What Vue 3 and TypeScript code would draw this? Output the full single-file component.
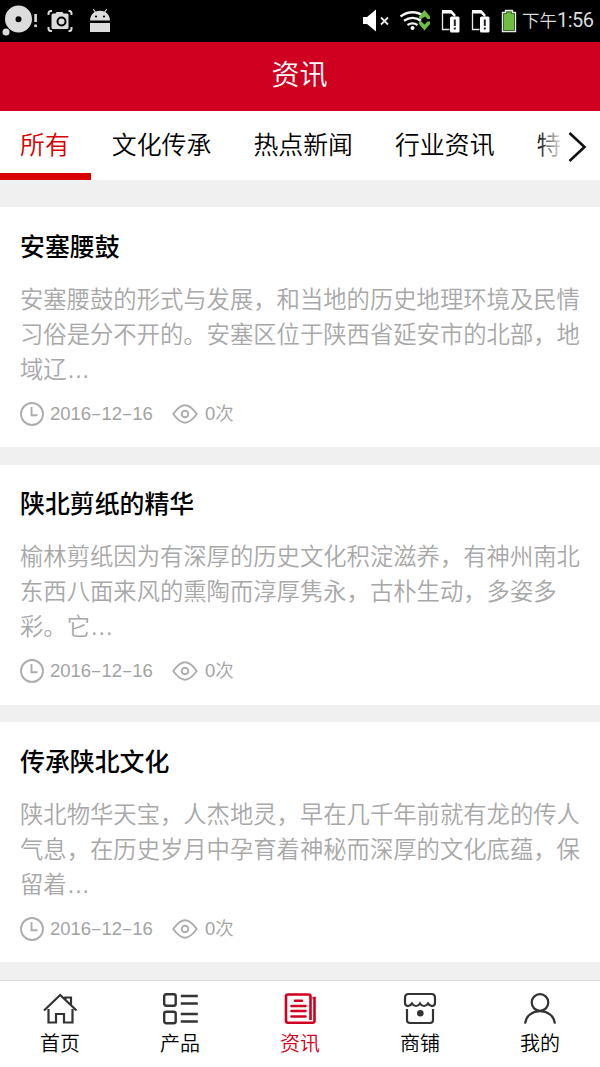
<script setup lang="ts">
interface Article {
  title: string
  lines: string[]
  more: string
  date: string[]
  views: number
}

const tabs: string[] = ['所有', '文化传承', '热点新闻', '行业资讯', '特产']

const articles: Article[] = [
  {
    title: '安塞腰鼓',
    lines: ['安塞腰鼓的形式与发展，和当地的历史地理环境及民情', '习俗是分不开的。安塞区位于陕西省延安市的北部，地'],
    more: '域辽',
    date: ['2016', '12', '16'],
    views: 0,
  },
  {
    title: '陕北剪纸的精华',
    lines: ['榆林剪纸因为有深厚的历史文化积淀滋养，有神州南北', '东西八面来风的熏陶而淳厚隽永，古朴生动，多姿多'],
    more: '彩。它',
    date: ['2016', '12', '16'],
    views: 0,
  },
  {
    title: '传承陕北文化',
    lines: ['陕北物华天宝，人杰地灵，早在几千年前就有龙的传人', '气息，在历史岁月中孕育着神秘而深厚的文化底蕴，保'],
    more: '留着',
    date: ['2016', '12', '16'],
    views: 0,
  },
]

const navItems: { label: string; icon: string }[] = [
  { label: '首页', icon: 'home' },
  { label: '产品', icon: 'list' },
  { label: '资讯', icon: 'news' },
  { label: '商铺', icon: 'shop' },
  { label: '我的', icon: 'user' },
]
</script>

<template>
  <div class="screen">
    <div class="status">
      <svg class="status-left" width="120" height="41" viewBox="0 0 120 41">
        <g fill="#dcdcdc">
          <path fill-rule="evenodd" d="M18.500 5.500a13.500 13.500 0 1 0 0 27a13.500 13.500 0 1 0 0-27zM18.500 16.200a3 3 0 1 1 0 6a3 3 0 1 1 0-6z" />
          <circle cx="6" cy="32" r="3.500" />
          <rect x="34.300" y="14" width="2.600" height="8" />
          <rect x="34.300" y="24.500" width="2.600" height="2.600" />
          <path d="M51.500 15q0-1.500 1.500-1.500h2.500l1-1.500h6l1 1.500h3.500q1.500 0 1.500 1.500v12.500q0 1.500-1.500 1.500h-14q-1.500 0-1.500-1.500z" />
          <path d="M90 20.500q.3-6 4.700-8.500l-2-2.700.8-.6 2.200 2.800q4.300-1.500 8.600 0l2.200-2.800.8.600-2 2.700q4.400 2.500 4.700 8.500z" />
          <rect x="90" y="23" width="20" height="9" />
        </g>
        <circle cx="61.500" cy="21.500" r="4" fill="#dcdcdc" stroke="#000" stroke-width="2" />
        <path d="M48.500 15v-1.500q0-2.500 2.500-2.500h1M68.500 11h1q2 0 2 2.500v1.500M48.500 27v1.500q0 2.500 2.500 2.500h1M68.500 31h1q2 0 2-2.500v-1.500" fill="none" stroke="#dcdcdc" stroke-width="2" />
        <circle cx="96" cy="16.500" r="1.100" fill="#000" />
        <circle cx="104" cy="16.500" r="1.100" fill="#000" />
      </svg>
      <div class="status-right">
        <svg width="156" height="41" viewBox="362 0 156 41">
          <path d="M363 17h4l9-7.500v22l-9-7.500h-4z" fill="#fff" />
          <path d="M381 17.500l7 7M388 17.500l-7 7" stroke="#e8e8e8" stroke-width="1.800" />
          <g fill="none" stroke="#f4f4f4" stroke-width="2.300">
            <path d="M400.500 16.500q12-8.500 24 0" />
            <path d="M404 20.700q8.500-5.700 17 0" />
            <path d="M407.500 25q5-3.200 10 0" />
          </g>
          <circle cx="412.500" cy="28" r="2" fill="#fff" />
          <path d="M419 16.500l5.500-6.500 5.500 6.500v2.500h-2.500l-3-3-3 3h-2.500zM419 24v-2.500h2.500l3 3 3-3h2.500v2.500l-5.500 6.500z" fill="#70bd45" />
          <g v-for="x in [441.500, 471.500]" :key="x" :transform="`translate(${x} 0)`">
            <path d="M1 12v17.500h7" fill="none" stroke="#e8e8e8" stroke-width="1.300" />
            <path d="M.5 13.500V10h9.500l4 4.500v2h-1.500l-3-3z" fill="#fff" />
            <rect x="8.500" y="16.500" width="9.500" height="16" rx="1.500" fill="#fff" />
            <path d="M13.300 19.500v6.500M13.300 27.500v2" stroke="#222" stroke-width="2" />
          </g>
          <path d="M505.500 10.500h7v2h3v19h-13v-19h3z" fill="#70bd45" stroke="#e8e8e8" stroke-width="1.400" />
          <path d="M506.500 12v1.500h-3v17h11v-17h-3v-1.500z" fill="none" stroke="#263c19" stroke-width=".7" />
        </svg>
        <span class="clock"><span class="ampm">下午</span>1:56</span>
      </div>
    </div>

    <header class="header">资讯</header>

    <nav class="tabs">
      <span v-for="(tab, i) in tabs" :key="tab" class="tab" :class="{ active: i === 0 }">{{ tab }}</span>
      <div class="more">
        <svg width="36" height="69" viewBox="0 0 36 69"><path d="M5.500 22l15 14-15 14" fill="none" stroke="#111" stroke-width="2.600" /></svg>
      </div>
    </nav>

    <main class="feed">
      <article v-for="a in articles" :key="a.title" class="card">
        <h2>{{ a.title }}</h2>
        <p>
          <span v-for="line in a.lines" :key="line" class="line">{{ line }}</span>
          <span class="line">{{ a.more }}<span class="dots">...</span></span>
        </p>
        <div class="meta">
          <svg width="24" height="24" viewBox="0 0 24 24" fill="none" stroke="#adadad" stroke-width="1.900">
            <circle cx="12" cy="12" r="11" />
            <path d="M11.500 5v8.200h6" />
          </svg>
          <span class="date"><template v-for="(part, i) in a.date" :key="i"><span v-if="i" class="dash">-</span>{{ part }}</template></span>
          <svg class="eye" width="26" height="24" viewBox="0 0 26 24" fill="none" stroke="#adadad" stroke-width="1.900">
            <path d="M1.200 12C6 5.500 9 3.300 13 3.300S20 5.500 24.800 12C20 18.500 17 20.700 13 20.700S6 18.500 1.200 12z" stroke-linejoin="round" />
            <circle cx="13" cy="12" r="3.300" />
          </svg>
          <span>{{ a.views }}次</span>
        </div>
      </article>
    </main>

    <footer class="bottom">
      <div v-for="item in navItems" :key="item.icon" class="item" :class="{ current: item.icon === 'news' }">
        <svg width="36" height="34" viewBox="0 0 36 34" fill="none" stroke="currentColor" stroke-width="2.200">
          <g v-if="item.icon === 'home'">
            <path d="M2 18.500L18.200 3l16.300 15.500M6.500 17v13.500h7.500V22h8v8.500h8.500V17M23.500 8V5.500h5.500V13" />
          </g>
          <g v-else-if="item.icon === 'list'" stroke-width="2.400">
            <rect x="2.200" y="2.200" width="11.500" height="11.500" rx="2" />
            <rect x="2.200" y="19.700" width="11.500" height="11.500" rx="2" />
            <path d="M18.800 4H35.800M18.800 11.500H35.800M18.800 22H35.800M18.800 29.500H35.800" />
          </g>
          <g v-else-if="item.icon === 'news'" stroke-width="2.600">
            <path d="M28.500 28V4.500q0-2-2-2H6q-2 0-2 2v24.300q0 2 2 2h24.500q2 0 2-2V6h-2" />
            <path d="M13 8.700h7M9.500 14h14M9.500 19h14M9.500 24.500h14" stroke-linecap="round" />
          </g>
          <g v-else-if="item.icon === 'shop'">
            <path d="M3 6q0-4 3.500-4h23q3.500 0 3.500 4v5q0 2.500-2.500 3-2.500.3-4.500-2.500-1.500 2.500-4 2.500t-4-2.500q-1.500 2.500-4 2.500t-4-2.500q-2 2.800-4.500 2.500Q3 13.500 3 11zM5 17v11q0 3 3 3h20q3 0 3-3V17" />
            <circle cx="18.300" cy="21.300" r="3.300" fill="currentColor" stroke="none" />
          </g>
          <g v-else>
            <circle cx="18" cy="10.500" r="8.300" />
            <path d="M3 31.700C4.500 15 31.500 15 33 31.700" />
          </g>
        </svg>
        <span class="label">{{ item.label }}</span>
      </div>
    </footer>
  </div>
</template>

<style>
body {
  margin: 0;
}
</style>

<style scoped>
.screen {
  width: 600px;
  height: 1067px;
  overflow: hidden;
  display: flex;
  flex-direction: column;
  background: #f0f0f0;
  color: #000;
  font-family: 'Liberation Sans', 'Noto Sans CJK SC', sans-serif;
  font-weight: 350;
}
svg {
  display: block;
  flex: none;
}
.status {
  flex: none;
  height: 41.500px;
  background: #000;
  display: flex;
  justify-content: space-between;
}
.status-right {
  display: flex;
  width: 238px;
}
.clock {
  font-family: Roboto, 'Noto Sans CJK SC', sans-serif;
  font-size: 20px;
  font-weight: 400;
  letter-spacing: -0.500px;
  line-height: 41px;
  color: #dcdcdc;
  margin-left: 4px;
  white-space: nowrap;
}
.ampm {
  font-size: 17.500px;
  font-weight: 350;
  letter-spacing: 0;
}
.header {
  flex: none;
  height: 69.500px;
  background: #d00020;
  color: #fff;
  font-size: 28px;
  line-height: 67px;
  text-align: center;
  text-indent: -1px;
}
.tabs {
  position: relative;
  flex: none;
  height: 69px;
  background: #fff;
  display: flex;
  overflow: hidden;
}
.tab {
  flex: none;
  box-sizing: border-box;
  height: 69px;
  padding: 0 21px;
  font-size: 24.900px;
  line-height: 69px;
  white-space: nowrap;
}
.tab.active {
  padding-left: 20px;
  color: #d80000;
  border-bottom: 7px solid #d80000;
}
.more {
  position: absolute;
  top: 0;
  right: 0;
  width: 64px;
  height: 69px;
  display: flex;
  justify-content: flex-end;
  background: linear-gradient(to right, rgba(255, 255, 255, 0), #fff 28px);
}
.feed {
  flex: 1;
  min-height: 0;
  overflow: hidden;
  padding-top: 26.900px;
  display: flex;
  flex-direction: column;
  gap: 17.700px;
}
.card {
  flex: none;
  box-sizing: border-box;
  height: 240px;
  padding: 19.700px 20px 0;
  background: #fff;
}
h2 {
  margin: 0;
  font-size: 24.900px;
  line-height: 40px;
  font-weight: 500;
}
p {
  margin: 16px 0 0;
  font-size: 23.330px;
  line-height: 35px;
  color: #a8a8a8;
}
.line {
  display: block;
  white-space: nowrap;
}
.dots {
  letter-spacing: 1px;
  margin-left: 1px;
}
.meta {
  display: flex;
  align-items: center;
  height: 28px;
  margin-top: 12px;
  font-size: 18.500px;
  line-height: 28px;
  color: #a3a3a3;
}
.date {
  margin-left: 6px;
  width: 103px;
  white-space: nowrap;
}
.dash {
  display: inline-block;
  width: 0.556em;
  text-align: center;
  transform: scaleX(1.8);
}
.eye {
  margin: 0 7px 0 19px;
}
.bottom {
  flex: none;
  box-sizing: border-box;
  height: 87px;
  border-top: 1px solid #d8d8d8;
  background: #fff;
  display: flex;
}
.item {
  flex: 1;
  display: flex;
  flex-direction: column;
  align-items: center;
  padding-top: 11px;
  color: #333;
}
.label {
  font-size: 20px;
  line-height: 30px;
  margin-top: 3px;
  color: #000;
}
.current,
.current .label {
  color: #d00020;
}
</style>
